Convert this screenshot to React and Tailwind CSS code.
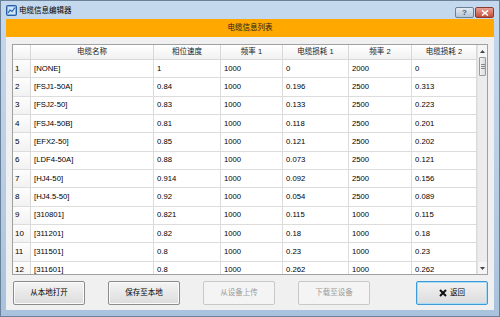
import React from "react";

const rows = [
  ["1", "[NONE]", "1", "1000", "0", "2000", "0"],
  ["2", "[FSJ1-50A]", "0.84", "1000", "0.196", "2500", "0.313"],
  ["3", "[FSJ2-50]", "0.83", "1000", "0.133", "2500", "0.223"],
  ["4", "[FSJ4-50B]", "0.81", "1000", "0.118", "2500", "0.201"],
  ["5", "[EFX2-50]", "0.85", "1000", "0.121", "2500", "0.202"],
  ["6", "[LDF4-50A]", "0.88", "1000", "0.073", "2500", "0.121"],
  ["7", "[HJ4-50]", "0.914", "1000", "0.092", "2500", "0.156"],
  ["8", "[HJ4.5-50]", "0.92", "1000", "0.054", "2500", "0.089"],
  ["9", "[310801]", "0.821", "1000", "0.115", "1000", "0.115"],
  ["10", "[311201]", "0.82", "1000", "0.18", "1000", "0.18"],
  ["11", "[311501]", "0.8", "1000", "0.23", "1000", "0.23"],
  ["12", "[311601]", "0.8", "1000", "0.262", "1000", "0.262"],
];

const headers = ["电缆名称", "相位速度", "频率 1", "电缆损耗 1", "频率 2", "电缆损耗 2"];
const widths = ["w-[123px]", "w-[67px]", "w-[62px]", "w-[66px]", "w-[63px]", "w-[65px]"];

const font = "font-['Liberation_Sans','Noto_Sans_CJK_SC',sans-serif]";

function Btn({ children, disabled, def }) {
  return (
    <div
      className={`w-[72px] h-[24px] rounded-[2px] flex items-center justify-center text-[7.5px] ${
        disabled
          ? "border border-[#c8c8c8] bg-[#f4f4f4] text-[#9a9a9a]"
          : def
          ? "border border-[#3c9bd6] bg-gradient-to-b from-[#f2f2f2] to-[#dcdcdc] text-black shadow-[inset_0_0_0_1px_#a9dcf5]"
          : "border border-[#8c8c8c] bg-gradient-to-b from-[#f4f4f4] to-[#dcdcdc] text-black shadow-[inset_0_0_0_1px_#fbfbfb]"
      }`}
    >
      {children}
    </div>
  );
}

export default function App() {
  return (
    <div
      className={`w-[500px] h-[317px] flex flex-col border border-[#6b819a] bg-gradient-to-b from-[#c4d8ee] via-[#b9cfe6] to-[#a9c2dd] ${font}`}
    >
      {/* Title bar */}
      <div className="h-[18px] flex items-start relative">
        <div className="flex items-center mt-[4px] ml-[5px]">
          <svg width="11" height="11" viewBox="0 0 11 11">
            <rect x="0.5" y="0.5" width="10" height="10" rx="1" fill="#3b7fd0" stroke="#2a5f9e" />
            <rect x="1.5" y="1.5" width="8" height="8" fill="#cfe3f7" />
            <polyline points="2,8 4,5 6,6.5 9,2.5" fill="none" stroke="#1f5fb0" strokeWidth="1.2" />
          </svg>
          <span className="ml-[2px] text-[7.5px] text-black leading-none">电缆信息编辑器</span>
        </div>
        <div className="flex-1" />
        <div className="flex mt-[6px] mr-[5px] gap-[1px]">
          <div className="w-[19px] h-[11px] rounded-[2px] border border-[#6f7f93] bg-gradient-to-b from-[#e4ebf3] to-[#b7c4d3] flex items-center justify-center text-[8px] leading-none text-[#4a5868] font-bold">
            ?
          </div>
          <div className="w-[19px] h-[11px] rounded-[2px] border border-[#8a3a32] bg-gradient-to-b from-[#e8a194] to-[#c44a36] flex items-center justify-center">
            <svg width="8" height="6" viewBox="0 0 8 6">
              <path d="M1 0.5 L7 5.5 M7 0.5 L1 5.5" stroke="#fff" strokeWidth="1.6" />
            </svg>
          </div>
        </div>
      </div>

      {/* Client area */}
      <div className="mx-[5px] flex-1 bg-[#f0f0f0] flex flex-col">
        <div className="h-[18px] bg-[#ffa800] flex items-center justify-center text-[7.5px] text-[#222]">
          电缆信息列表
        </div>

        <div className="mx-[6px] mt-[7px] h-[231px] border border-[#a0a0a0] bg-white flex overflow-hidden">
          <div className="flex flex-col w-[464px] overflow-hidden">
            {/* Header */}
            <div className="flex h-[15px] shrink-0 bg-gradient-to-b from-[#ffffff] to-[#f1f1f1] border-b border-[#d8d8d8]">
              <div className="w-[18px] border-r border-[#d8d8d8]" />
              {headers.map((h, i) => (
                <div
                  key={i}
                  className={`${widths[i]} border-r border-[#d8d8d8] flex items-center justify-center text-[7.5px] text-[#222] leading-none`}
                >
                  {h}
                </div>
              ))}
            </div>
            {rows.map((r, ri) => (
              <div key={ri} className="flex h-[18.33px] shrink-0 border-b border-[#dcdcdc]">
                <div className="w-[18px] bg-gradient-to-b from-[#fdfdfd] to-[#f2f2f2] border-r border-[#d8d8d8] flex items-center pl-[2px] text-[8px] text-black leading-none">
                  {r[0]}
                </div>
                {r.slice(1).map((c, ci) => (
                  <div
                    key={ci}
                    className={`${widths[ci]} border-r border-[#dcdcdc] flex items-center pl-[3px] text-[7.7px] text-black leading-none`}
                  >
                    {c}
                  </div>
                ))}
              </div>
            ))}
          </div>
          {/* Scrollbar */}
          <div className="w-[10px] flex flex-col bg-[#ececec] border-l border-[#e2e2e2]">
            <div className="h-[12px] flex items-center justify-center bg-[#f5f5f5]">
              <svg width="5" height="3" viewBox="0 0 5 3">
                <path d="M0 3 L2.5 0 L5 3 Z" fill="#444" />
              </svg>
            </div>
            <div className="mx-[1px] h-[19px] rounded-[1px] border border-[#9a9a9a] bg-gradient-to-r from-[#f4f4f4] to-[#dadada] flex flex-col items-center justify-center gap-[1px]">
              <div className="w-[4px] h-[1px] bg-[#888]" />
              <div className="w-[4px] h-[1px] bg-[#888]" />
              <div className="w-[4px] h-[1px] bg-[#888]" />
            </div>
            <div className="flex-1" />
            <div className="h-[12px] flex items-center justify-center bg-[#f5f5f5]">
              <svg width="5" height="3" viewBox="0 0 5 3">
                <path d="M0 0 L2.5 3 L5 0 Z" fill="#444" />
              </svg>
            </div>
          </div>
        </div>

        <div className="mt-[6px] ml-[7px] flex">
          <Btn>从本地打开</Btn>
          <div className="ml-[23px]">
            <Btn>保存至本地</Btn>
          </div>
          <div className="ml-[23px]">
            <Btn disabled>从设备上传</Btn>
          </div>
          <div className="ml-[23px]">
            <Btn disabled>下载至设备</Btn>
          </div>
          <div className="ml-[46px]">
            <Btn def>
              <span className="flex items-center gap-[3px]">
                <svg width="8" height="8" viewBox="0 0 8 8">
                  <path d="M1 1 L7 7 M7 1 L1 7" stroke="#111" strokeWidth="2" />
                </svg>
                返回
              </span>
            </Btn>
          </div>
        </div>
      </div>
      <div className="h-[6px]" />
    </div>
  );
}
